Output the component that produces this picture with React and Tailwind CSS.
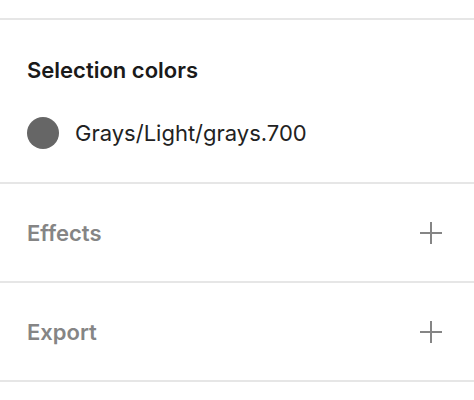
function PlusIcon() {
  return (
    <svg width="22" height="22" viewBox="0 0 22 22" fill="none">
      <path d="M11 0V22M0 11H22" stroke="#858585" strokeWidth="2" />
    </svg>
  )
}

function Section({ title }) {
  return (
    <div className="flex h-[99px] items-center justify-between border-b-2 border-[#e6e6e6] pl-[27px] pr-[32px]">
      <span className="text-[22px] leading-[28px] font-semibold text-[#858585]">{title}</span>
      <PlusIcon />
    </div>
  )
}

export default function App() {
  return (
    <div className="w-[474px] h-[400px] bg-white font-['Inter',sans-serif]">
      <div className="h-[20px] border-b-2 border-[#e6e6e6]" />
      <div className="flex h-[164px] flex-col border-b-2 border-[#e6e6e6] px-[27px] pt-[36px]">
        <h2 className="text-[22px] leading-[28px] font-semibold text-[#1a1a1a]">Selection colors</h2>
        <div className="mt-[33px] flex items-center gap-[16px]">
          <span className="h-[32px] w-[32px] rounded-full bg-[#666666]" />
          <span className="text-[22px] leading-[28px] text-[#222222]">Grays/Light/grays.700</span>
        </div>
      </div>
      <Section title="Effects" />
      <Section title="Export" />
    </div>
  )
}
